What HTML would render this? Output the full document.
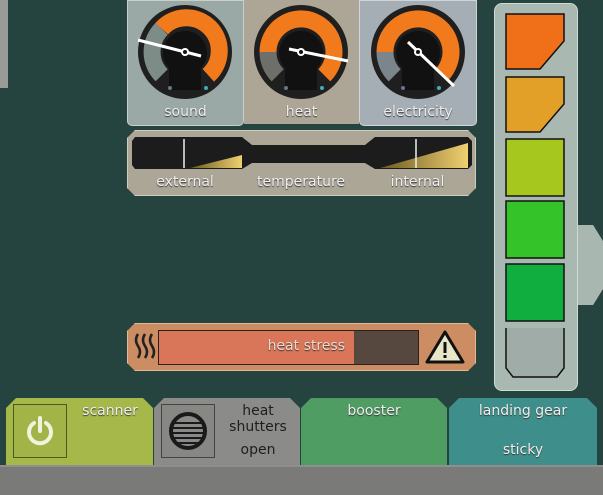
<!DOCTYPE html>
<html><head><meta charset="utf-8"><style>
body{margin:0;width:603px;height:495px;background:#25433f;position:relative;overflow:hidden;font-family:"DejaVu Sans","Liberation Sans",sans-serif}
.a{position:absolute;box-sizing:border-box}
.lbl{color:#eee;font-size:14px;text-align:center;text-shadow:0 1px 1px #333}
.btn{clip-path:polygon(10px 0,calc(100% - 10px) 0,100% 10px,100% 100%,0 100%,0 10px)}
</style></head><body>
<div class="a" style="left:0;top:0;width:8px;height:88px;background:#9a9a98"></div>
<div class="a" style="left:127px;top:0;width:117px;height:126px;background:#9aa9a5;border:1px solid #c8d0cc;border-radius:0 0 5px 5px"></div>
<div class="a" style="left:244px;top:0;width:115px;height:124px;background:#ada595"></div>
<div class="a" style="left:359px;top:0;width:118px;height:126px;background:#a5aeb5;border:1px solid #cfd5d8;border-radius:0 0 5px 5px"></div>
<svg class="a" style="left:0;top:0" width="603" height="200">
<defs><g id="g"><circle r="47" fill="#1f1f1f"/><path d="M-16,38 L-16,16 A22 22 0 1 1 16,16 L16,38 Z" fill="#111"/></g></defs>
<g transform="translate(185,52)"><use href="#g"/>
<path d="M-23.3,23.3 A33 33 0 0 1 -23.3,-23.3" stroke="#7e8c88" stroke-width="17" fill="none"/>
<path d="M-23.3,-23.3 A33 33 0 1 1 23.3,23.3" stroke="#f07a1c" stroke-width="17" fill="none"/>
<circle cx="-15" cy="36" r="2" fill="#678"/><circle cx="21" cy="36" r="2" fill="#4ab"/>
<line x1="-47" y1="-12" x2="16" y2="4" stroke="#fff" stroke-width="3"/><circle r="4" fill="#fff"/><circle r="2" fill="#111"/></g>
<g transform="translate(301,52)"><use href="#g"/>
<path d="M-23.3,23.3 A33 33 0 0 1 -33,0" stroke="#6e6e6a" stroke-width="17" fill="none"/>
<path d="M-33,0 A33 33 0 1 1 23.3,23.3" stroke="#f07a1c" stroke-width="17" fill="none"/>
<circle cx="-15" cy="36" r="2" fill="#678"/><circle cx="21" cy="36" r="2" fill="#4ab"/>
<line x1="-12" y1="-3" x2="47" y2="9" stroke="#fff" stroke-width="3"/><circle r="4" fill="#fff"/><circle r="2" fill="#111"/></g>
<g transform="translate(418,52)"><use href="#g"/>
<path d="M-23.3,23.3 A33 33 0 0 1 -33,0" stroke="#7b868c" stroke-width="17" fill="none"/>
<path d="M-33,0 A33 33 0 1 1 23.3,23.3" stroke="#f07a1c" stroke-width="17" fill="none"/>
<circle cx="-15" cy="36" r="2" fill="#678"/><circle cx="21" cy="36" r="2" fill="#4ab"/>
<line x1="-10" y1="-10" x2="36" y2="34" stroke="#fff" stroke-width="3"/><circle r="4" fill="#fff"/><circle r="2" fill="#111"/></g>
</svg>
<div class="a lbl" style="left:127px;top:104px;width:117px">sound</div>
<div class="a lbl" style="left:244px;top:104px;width:115px">heat</div>
<div class="a lbl" style="left:359px;top:104px;width:118px">electricity</div>
<div class="a" style="left:127px;top:130px;width:349px;height:66px;background:#aca697;border:1px solid #d0ccc0;clip-path:polygon(8px 0,calc(100% - 8px) 0,100% 8px,100% calc(100% - 8px),calc(100% - 8px) 100%,8px 100%,0 calc(100% - 8px),0 8px)"></div>
<svg class="a" style="left:130px;top:135px" width="344" height="38">
<defs><linearGradient id="y" x1="0" x2="1"><stop offset="0" stop-color="#6a5a20"/><stop offset="1" stop-color="#f0d070"/></linearGradient></defs>
<path d="M5,2 H112 L122,10 H235 L245,2 H338 L342,6 V30 L338,34 H245 L235,28 H122 L112,34 H5 L2,30 V6 Z" fill="#1c1c1c"/>
<polygon points="60,33 112,20 112,33" fill="url(#y)"/>
<polygon points="250,33 338,8 338,33" fill="url(#y)"/>
<line x1="54" y1="4" x2="54" y2="33" stroke="#eee" stroke-width="1.5"/>
<line x1="286" y1="4" x2="286" y2="33" stroke="#eee" stroke-width="1.5"/>
</svg>
<div class="a lbl" style="left:140px;top:174px;width:90px">external</div>
<div class="a lbl" style="left:240px;top:174px;width:122px">temperature</div>
<div class="a lbl" style="left:375px;top:174px;width:85px">internal</div>
<div class="a" style="left:570px;top:225px;width:33px;height:80px;background:#a9b7b1;clip-path:polygon(0 0,70% 0,100% 20%,100% 80%,70% 100%,0 100%)"></div>
<div class="a" style="left:494px;top:3px;width:84px;height:388px;background:#aab8b2;border:1px solid #d0dad5;border-radius:8px"></div>
<svg class="a" style="left:505px;top:13px" width="62" height="370">
<path d="M1,1 H59 V28 L35,56 H1 Z" fill="#f07019" stroke="#111" stroke-width="1.5"/>
<path d="M1,64 H59 V91 L35,119 H1 Z" fill="#e3a028" stroke="#111" stroke-width="1.5"/>
<rect x="1" y="126" width="58" height="57" fill="#a6c81e" stroke="#111" stroke-width="1.5"/>
<rect x="1" y="188" width="58" height="57" fill="#34c42a" stroke="#111" stroke-width="1.5"/>
<rect x="1" y="251" width="58" height="57" fill="#0fae3e" stroke="#111" stroke-width="1.5"/>
<path d="M1,315 V355 L8,364 H52 L59,355 V315" fill="#a0aca8" stroke="#111" stroke-width="1.5"/>
</svg>
<div class="a" style="left:127px;top:323px;width:349px;height:48px;background:#cc8d62;border:1px solid #e2b898;clip-path:polygon(8px 0,calc(100% - 8px) 0,100% 8px,100% calc(100% - 8px),calc(100% - 8px) 100%,8px 100%,0 calc(100% - 8px),0 8px)"></div>
<div class="a" style="left:158px;top:330px;width:261px;height:35px;background:#56473f;border:1px solid #2a2020"></div>
<div class="a" style="left:159px;top:331px;width:195px;height:33px;background:#d9765a"></div>
<div class="a lbl" style="left:159px;top:338px;width:186px;text-align:right;color:#f0d8cc;font-size:14px">heat stress</div>
<svg class="a" style="left:132px;top:332px" width="26" height="30"><g fill="none" stroke="#222" stroke-width="2.5"><path d="M6,2 q-4,6 0,12 q4,6 0,12"/><path d="M13,2 q-4,6 0,12 q4,6 0,12"/><path d="M20,2 q-4,6 0,12 q4,6 0,12"/></g></svg>
<svg class="a" style="left:424px;top:329px" width="42" height="36"><path d="M21,3 L39,33 H3 Z" fill="#e8e6c8" stroke="#111" stroke-width="3" stroke-linejoin="round"/><rect x="19.5" y="13" width="3" height="11" fill="#111"/><rect x="19.5" y="26" width="3" height="3" fill="#111"/></svg>
<div class="a btn" style="left:6px;top:398px;width:147px;height:67px;background:#a6b84a"></div>
<div class="a" style="left:13px;top:404px;width:54px;height:54px;border:1px solid #4c5a22;background:#a2b447"></div>
<svg class="a" style="left:24px;top:414px" width="32" height="34"><path d="M10,9 A11 11 0 1 0 22,9" fill="none" stroke="#f2f2e0" stroke-width="4" stroke-linecap="round"/><line x1="16" y1="4" x2="16" y2="17" stroke="#f2f2e0" stroke-width="4" stroke-linecap="round"/></svg>
<div class="a lbl" style="left:70px;top:403px;width:80px">scanner</div>
<div class="a btn" style="left:154px;top:398px;width:146px;height:67px;background:#8b8c89"></div>
<div class="a" style="left:161px;top:404px;width:54px;height:54px;border:1px solid #444;background:#878884"></div>
<svg class="a" style="left:167px;top:410px" width="42" height="42"><circle cx="21" cy="21" r="17" fill="#8a8a88" stroke="#1a1a1a" stroke-width="4"/><g stroke="#1a1a1a" stroke-width="2"><line x1="8" y1="13" x2="34" y2="13"/><line x1="6" y1="18" x2="36" y2="18"/><line x1="6" y1="23" x2="36" y2="23"/><line x1="7" y1="28" x2="35" y2="28"/><line x1="10" y1="33" x2="32" y2="33"/></g></svg>
<div class="a lbl" style="left:218px;top:403px;width:80px;color:#1e1e1e;text-shadow:none;line-height:16px">heat<br>shutters</div>
<div class="a lbl" style="left:218px;top:442px;width:80px;color:#1e1e1e;text-shadow:none">open</div>
<div class="a btn" style="left:301px;top:398px;width:146px;height:67px;background:#4f9d63"></div>
<div class="a lbl" style="left:301px;top:403px;width:146px">booster</div>
<div class="a btn" style="left:449px;top:398px;width:148px;height:67px;background:#3e8f8b"></div>
<div class="a lbl" style="left:449px;top:403px;width:148px">landing gear</div>
<div class="a lbl" style="left:449px;top:442px;width:148px">sticky</div>
<div class="a" style="left:0;top:465px;width:603px;height:30px;background:#7a7a78;border-top:2px solid #8e8e8c"></div>
</body></html>
